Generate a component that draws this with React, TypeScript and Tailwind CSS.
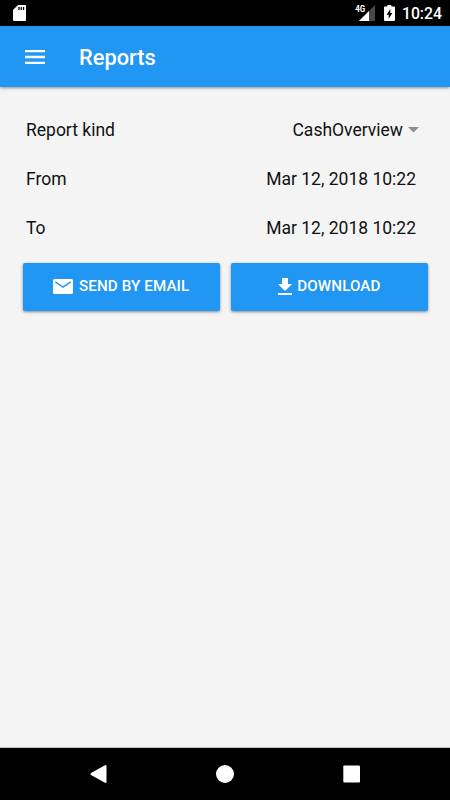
import type { ReactNode } from 'react';

const StatusBar = () => (
  <div className="flex h-[26px] shrink-0 items-center justify-between bg-black pl-[13px] pr-[9px] text-white">
    <svg width="13" height="16" viewBox="0 0 13 16" fill="currentColor">
      <path d="M5 0h7a1 1 0 0 1 1 1v14a1 1 0 0 1-1 1H1a1 1 0 0 1-1-1V5z" />
      <path d="M5.3 2h1.3v3H5.3zM7.6 2h1.3v3H7.6zM9.9 2h1.3v3H9.9z" fill="#000" />
    </svg>
    <div className="flex items-center">
      <svg width="20" height="16" viewBox="0 0 20 16" className="mr-[9px]">
        <path d="M20 0v16H4z" fill="#4a4a4a" />
        <path d="M14 6v10H4z" fill="#fff" />
        <text x="0.3" y="7.3" fill="#fff" stroke="#000" strokeWidth="1.5" paintOrder="stroke" fontSize="9" fontWeight="700" textLength="10" lengthAdjust="spacingAndGlyphs">
          4G
        </text>
      </svg>
      <svg width="11" height="16" viewBox="0 0 11 16" className="mr-[7px]">
        <path d="M3.3 0h4v1.6H10a1 1 0 0 1 1 1V15a1 1 0 0 1-1 1H1a1 1 0 0 1-1-1V2.6a1 1 0 0 1 1-1h2.3z" fill="#fff" />
        <path d="M6.3 4v4H8.4L4.7 13.8V9.7H2.6z" fill="#000" />
      </svg>
      <span className="-mr-px mt-[2px] text-[15.8px] font-medium leading-5">10:24</span>
    </div>
  </div>
);

const Header = () => (
  <header className="z-10 flex h-[61px] shrink-0 items-center bg-[#2196f3] pl-[25px] text-white shadow-[0_1px_3px_rgba(0,0,0,0.4)]">
    <button aria-label="Menu" className="mr-[34px]">
      <svg width="20" height="14" viewBox="0 0 20 14" fill="currentColor">
        <path d="M0 0h20v2.3H0zM0 5.85h20v2.3H0zM0 11.7h20V14H0z" />
      </svg>
    </button>
    <h1 className="mt-[2px] text-[21.8px] font-medium leading-7">Reports</h1>
  </header>
);

const Row = ({ label, children }: { label: string; children: ReactNode }) => (
  <div className="flex h-[49px] items-center justify-between pl-[26px] pr-[34px]">
    <span>{label}</span>
    <span className="flex items-center">{children}</span>
  </div>
);

const ActionButton = ({ icon, children }: { icon: ReactNode; children: ReactNode }) => (
  <button className="flex h-[48px] flex-1 items-center justify-center gap-[5.5px] rounded-[2px] bg-[#2196f3] pb-[2px] text-[15.2px] font-medium tracking-[0.1px] text-white shadow-[0_1px_3px_rgba(0,0,0,0.45)]">
    {icon}
    <span className="leading-5">{children}</span>
  </button>
);

const MailIcon = () => (
  <svg width="20" height="15" viewBox="0 0 20 15" className="mt-px">
    <rect width="20" height="15" rx="1.5" fill="#fff" />
    <path d="M2.3 2.9 10 8.2l7.7-5.3" fill="none" stroke="#2196f3" strokeWidth="1.4" />
  </svg>
);

const DownloadIcon = () => (
  <svg width="14" height="17" viewBox="0 0 14 17" fill="#fff" className="mt-px">
    <path d="M14 6h-4V0H4v6H0l7 7zM0 15v2h14v-2z" />
  </svg>
);

const NavigationBar = () => (
  <nav className="flex h-[52px] shrink-0 items-center justify-between bg-black px-[90px] text-white">
    <svg width="17" height="18" viewBox="0 0 17 18" fill="currentColor">
      <path d="M15 .3Q16.5-.3 16.5 1v16q0 1.3-1.5.7L1 9.9Q0 9 1 8.1z" />
    </svg>
    <svg width="18" height="18" viewBox="0 0 18 18" fill="currentColor">
      <circle cx="9" cy="9" r="9" />
    </svg>
    <svg width="17" height="18" viewBox="0 0 17 18" fill="currentColor">
      <rect x="0.3" y="0.5" width="16.7" height="17" rx="1" />
    </svg>
  </nav>
);

export default function App() {
  return (
    <div className="flex h-[800px] w-[450px] flex-col overflow-hidden bg-[#f4f4f4] font-[Roboto,sans-serif]">
      <StatusBar />
      <Header />
      <main className="flex-1 border-b border-[#c4c4c4] pt-[19px] text-[17.5px] text-[#111]">
        <Row label="Report kind">
          CashOverview
          <svg width="11" height="6" viewBox="0 0 11 6" className="-mr-[3px] mb-[2px] ml-[5px]">
            <path d="M0 0h11L5.5 5.5z" fill="#8e8e8e" />
          </svg>
        </Row>
        <Row label="From">Mar 12, 2018 10:22</Row>
        <Row label="To">Mar 12, 2018 10:22</Row>
        <div className="mt-[9.5px] flex gap-[11px] pl-[23px] pr-[22.5px]">
          <ActionButton icon={<MailIcon />}>SEND BY EMAIL</ActionButton>
          <ActionButton icon={<DownloadIcon />}>DOWNLOAD</ActionButton>
        </div>
      </main>
      <NavigationBar />
    </div>
  );
}
